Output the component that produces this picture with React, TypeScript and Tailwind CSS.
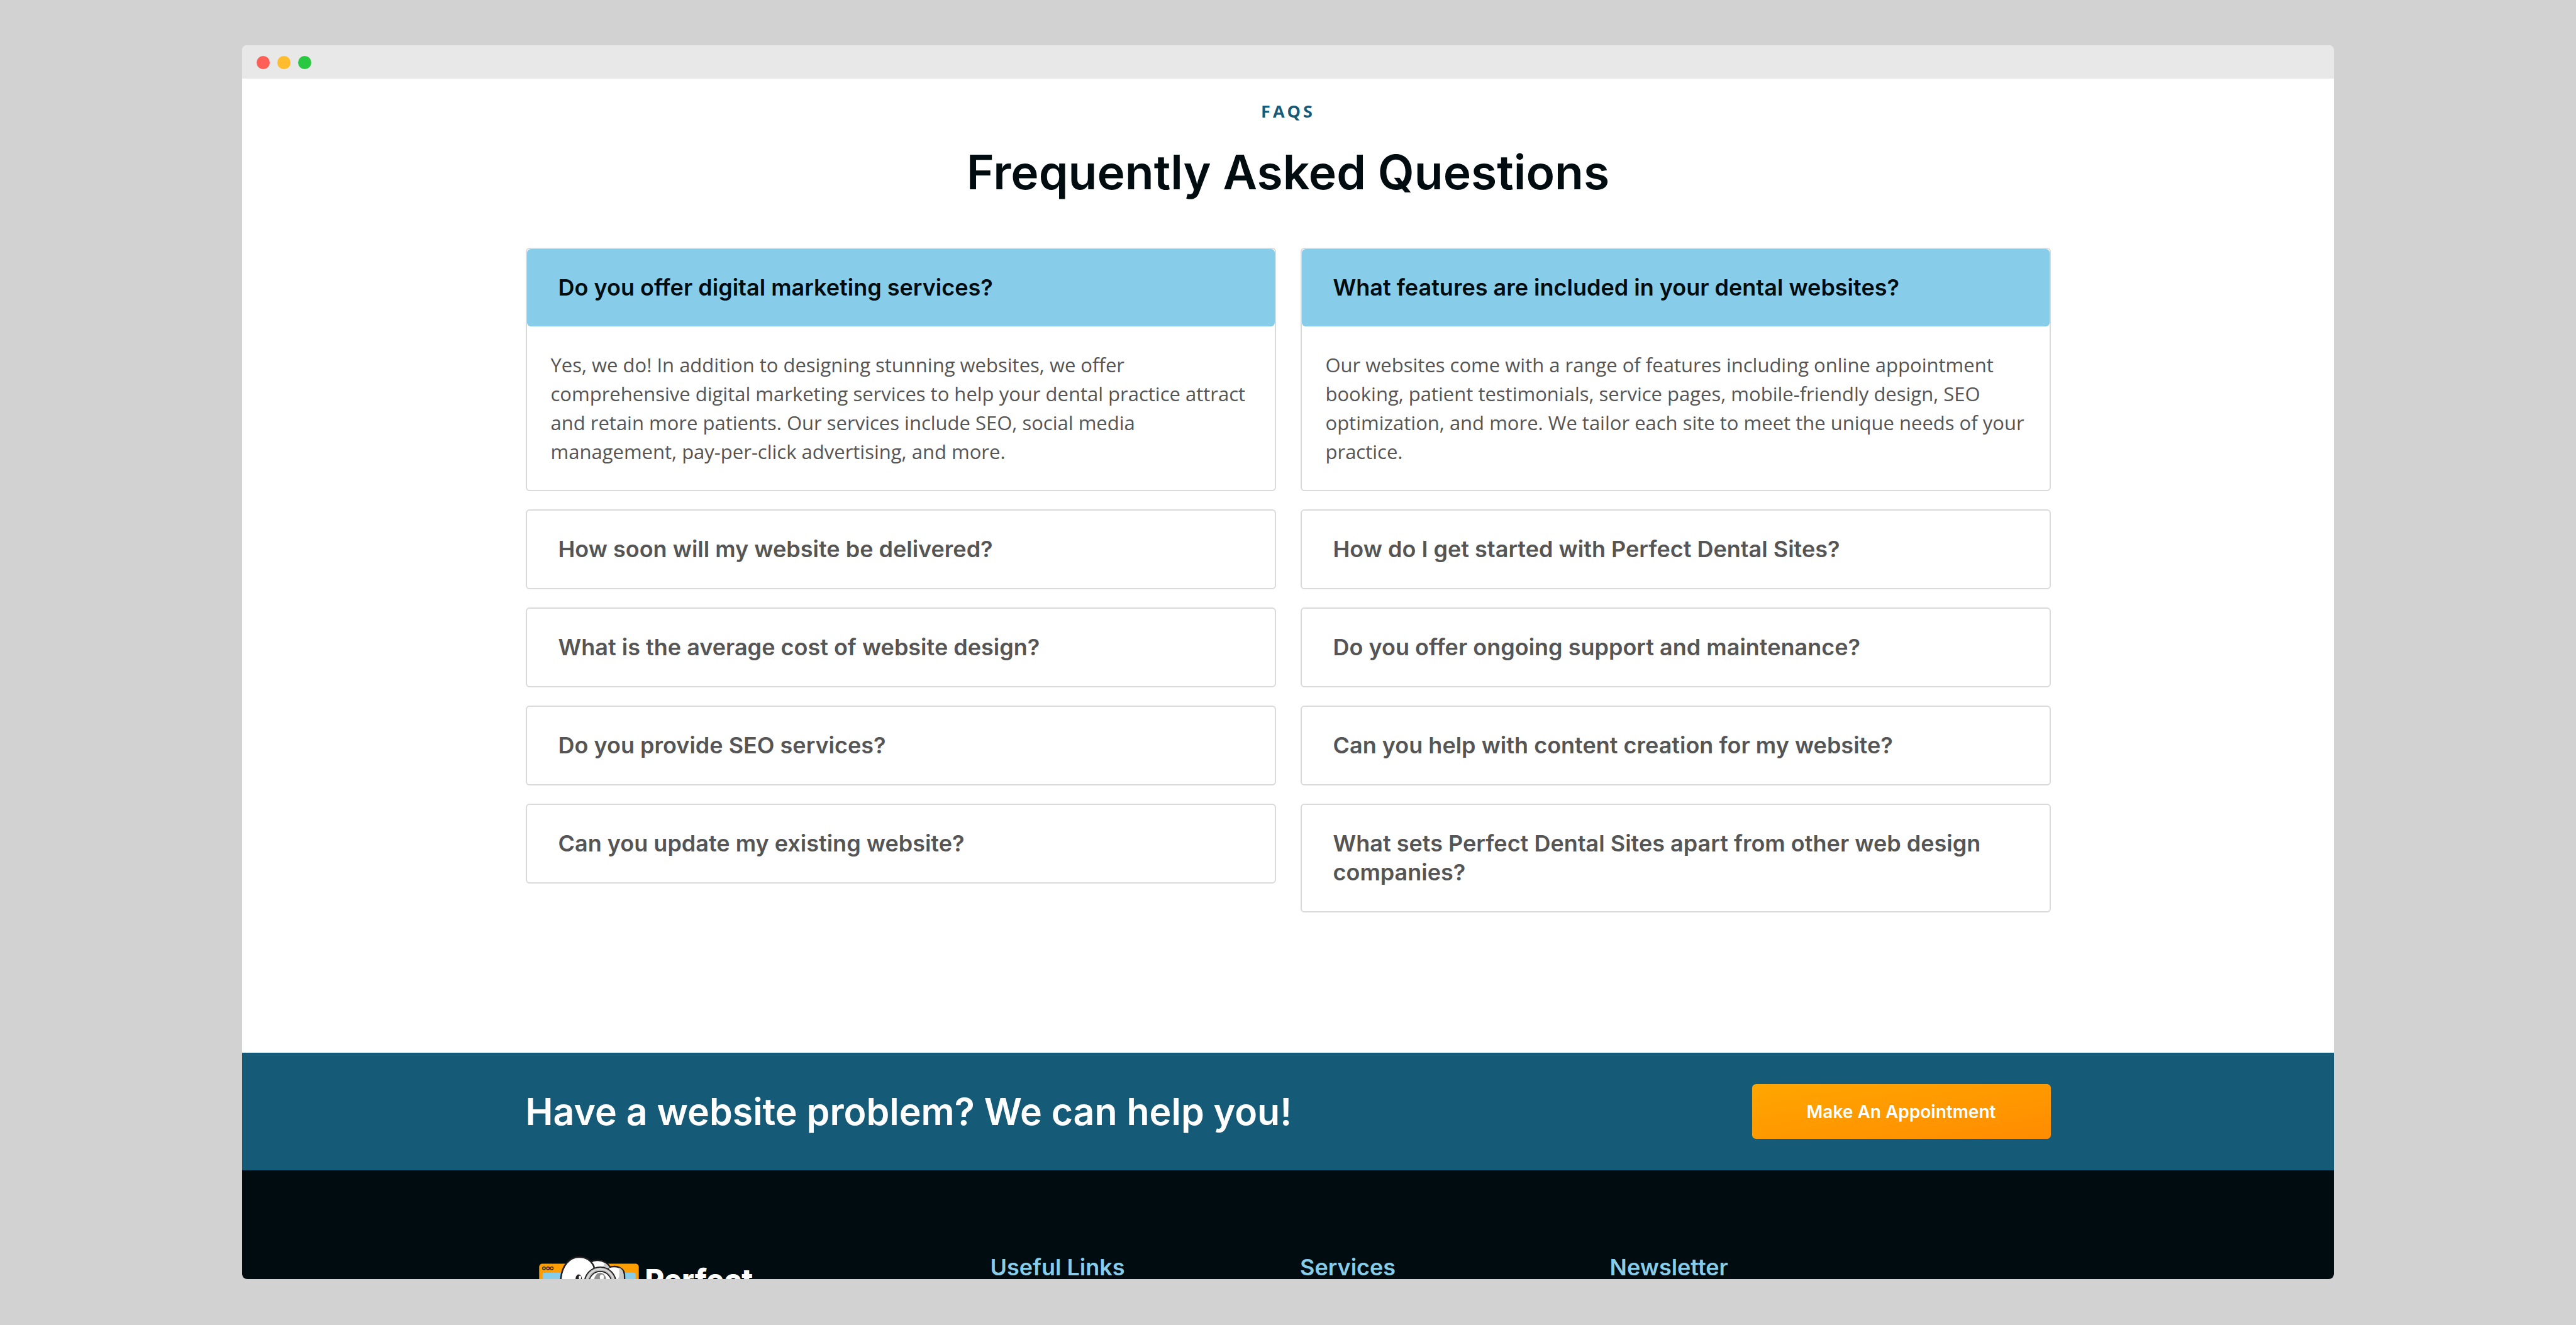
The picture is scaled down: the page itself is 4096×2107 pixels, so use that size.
import { useState } from "react";

type Faq = { q: string; a?: string; open?: boolean };

const leftFaqs: Faq[] = [
  {
    q: "Do you offer digital marketing services?",
    a: "Yes, we do! In addition to designing stunning websites, we offer comprehensive digital marketing services to help your dental practice attract and retain more patients. Our services include SEO, social media management, pay-per-click advertising, and more.",
    open: true,
  },
  { q: "How soon will my website be delivered?" },
  { q: "What is the average cost of website design?" },
  { q: "Do you provide SEO services?" },
  { q: "Can you update my existing website?" },
];

const rightFaqs: Faq[] = [
  {
    q: "What features are included in your dental websites?",
    a: "Our websites come with a range of features including online appointment booking, patient testimonials, service pages, mobile-friendly design, SEO optimization, and more. We tailor each site to meet the unique needs of your practice.",
    open: true,
  },
  { q: "How do I get started with Perfect Dental Sites?" },
  { q: "Do you offer ongoing support and maintenance?" },
  { q: "Can you help with content creation for my website?" },
  { q: "What sets Perfect Dental Sites apart from other web design companies?" },
];

function FaqCard({ faq }: { faq: Faq }) {
  const [open, setOpen] = useState(Boolean(faq.open));
  return (
    <div className="rounded-[6px] border-2 border-[#d9dadb] bg-white">
      <h3>
        <button
          type="button"
          aria-expanded={open}
          onClick={() => setOpen(!open)}
          className={
            open
              ? "block w-full rounded-[6px] bg-[#87cdea] pt-[38px] pr-[50px] pb-[39px] pl-[50px] text-left text-[36px] leading-[46px] font-semibold text-[#000c10]"
              : "block w-full rounded-[6px] pt-[38px] pr-[50px] pb-[39px] pl-[50px] text-left text-[36px] leading-[46px] font-semibold text-[#555555]"
          }
        >
          {faq.q}
        </button>
      </h3>
      {open && faq.a && (
        <p className="py-[38px] pr-[30px] pl-[38px] font-['Open_Sans',sans-serif] text-[31px] leading-[46px] text-[#555555]">{faq.a}</p>
      )}
    </div>
  );
}

function Logo() {
  return (
    <a href="#home" aria-label="Perfect Dental Sites" className="flex items-start pl-[21px]">
      <svg viewBox="0 0 496 310" className="mt-[5px] h-[99px] w-[159px] shrink-0" aria-hidden="true">
        <rect x="0" y="39" width="496" height="271" rx="16" fill="#ff9e00" />
        <rect x="17" y="84" width="463" height="210" rx="8" fill="#87cdea" />
        <g stroke="#231f20" strokeWidth="4">
          <circle cx="24" cy="62" r="7" fill="#c9b21c" />
          <circle cx="44" cy="62" r="7" fill="#f06fa8" />
          <circle cx="63" cy="62" r="7" fill="#ff9e00" />
        </g>
        <g stroke="#231f20" strokeWidth="8" strokeLinejoin="round">
          <path d="M230 60C248 28 270 21 292 22C322 24 342 36 356 60L340 140H240Z" fill="#fff" />
          <path d="M345 58C384 46 420 58 424 90C427 130 424 190 400 280H300Z" fill="#fff" />
          <path d="M180 290C130 240 100 160 108 112C114 50 150 6 198 6C232 6 258 20 272 52L320 290Z" fill="#fff" />
        </g>
        <path d="M326 36C340 44 347 52 351 60L330 66L302 60C316 58 324 50 326 36Z" fill="#c9c9c9" />
        <path d="M396 58C412 64 419 76 420 94L420 140H372C398 122 404 92 396 58Z" fill="#c9c9c9" />
        <circle cx="304" cy="134" r="78" fill="#b9b9b9" stroke="#231f20" strokeWidth="6" />
        <circle cx="304" cy="134" r="68" fill="none" stroke="#dedede" strokeWidth="6" />
        <circle cx="304" cy="134" r="56" fill="#fff" stroke="#231f20" strokeWidth="5" />
        <ellipse cx="304" cy="122" rx="30" ry="38" fill="#8f8f8f" />
        <ellipse cx="312" cy="106" rx="10" ry="13" fill="#fff" />
        <ellipse cx="197" cy="116" rx="16" ry="24" fill="#231f20" />
        <ellipse cx="203" cy="108" rx="6" ry="9" fill="#fff" />
      </svg>
      <span className="mt-[15px] pl-[10px] text-[47px] leading-[56px] font-extrabold text-white">Perfect</span>
    </a>
  );
}

export default function App() {
  return (
    <div className="flex h-screen flex-col overflow-hidden bg-[#d2d2d2] px-[9.4%] pt-[72px] pb-[73px] font-['Inter',sans-serif]">
      <div className="flex min-h-0 flex-1 flex-col overflow-hidden rounded-[8px] bg-white">
        <div className="flex h-[53px] shrink-0 items-center gap-[12px] bg-[#e8e8e8] px-[23px] pt-[2px]">
          <span className="size-[21px] rounded-full bg-[#ff5f57]" />
          <span className="size-[21px] rounded-full bg-[#febc2e]" />
          <span className="size-[21px] rounded-full bg-[#28c840]" />
        </div>

        <main className="mx-auto w-full max-w-[2425px] shrink-0 pt-[33px] pb-[223px]">
          <p className="text-center font-['Open_Sans',sans-serif] text-[27px] leading-[38px] font-bold tracking-[4px] text-[#155a76]">FAQS</p>
          <h2 className="pt-[32px] text-center text-[75px] leading-[92px] font-semibold text-[#000c10]">Frequently Asked Questions</h2>
          <div className="grid grid-cols-2 items-start gap-[39px] pt-[74px]">
            <div className="flex flex-col gap-[29px]">
              {leftFaqs.map((f) => (
                <FaqCard key={f.q} faq={f} />
              ))}
            </div>
            <div className="flex flex-col gap-[29px]">
              {rightFaqs.map((f) => (
                <FaqCard key={f.q} faq={f} />
              ))}
            </div>
          </div>
        </main>

        <section className="shrink-0 bg-[#155a76] py-[50px]">
          <div className="mx-auto flex w-full max-w-[2425px] items-center justify-between">
            <h2 className="text-[59px] leading-[72px] font-semibold text-white">Have a website problem? We can help you!</h2>
            <button
              type="button"
              className="h-[87px] w-[475px] rounded-[6px] bg-linear-to-br from-[#ffa600] to-[#ff8c00] text-[28px] leading-[36px] font-semibold text-white"
            >
              Make An Appointment
            </button>
          </div>
        </section>

        <footer className="min-h-0 flex-1 overflow-hidden bg-[#000c10]">
          <div className="mx-auto grid w-full max-w-[2463px] grid-cols-[3fr_2fr_2fr_3fr] pt-[131px] text-[36px] leading-[46px] font-semibold text-[#87cdea]">
            <div className="px-[19px]">
              <Logo />
            </div>
            <h3 className="px-[19px]">Useful Links</h3>
            <h3 className="px-[19px]">Services</h3>
            <h3 className="px-[19px]">Newsletter</h3>
          </div>
        </footer>
      </div>
    </div>
  );
}
